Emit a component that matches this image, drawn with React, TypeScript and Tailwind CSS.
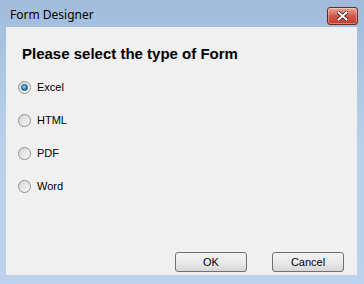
import React, { useState } from "react";

const options = ["Excel", "HTML", "PDF", "Word"];

function Radio({ checked }: { checked: boolean }) {
  return (
    <span className="relative flex h-[13px] w-[13px] shrink-0 items-center justify-center rounded-full border border-[#8e8f8f] bg-gradient-to-br from-[#d4d4d4] to-[#fbfbfb]">
      {checked && (
        <span className="h-[7px] w-[7px] rounded-full border border-[#1c4f7a] bg-[radial-gradient(circle_at_40%_35%,#9fd7f5,#2a83c2_55%,#10497a)]" />
      )}
    </span>
  );
}

export default function App() {
  const [selected, setSelected] = useState("Excel");
  return (
    <div
      className="flex h-[284px] w-[364px] flex-col bg-gradient-to-b from-[#a0bcdc] via-[#b8d0ea] to-[#bad2ec] px-[6px] pb-[9px] pr-[7px]"
      style={{ fontFamily: '"Liberation Sans", Arial, sans-serif' }}
    >
      <div className="flex h-[27px] items-center justify-between">
        <span
          className="pl-[4px] pt-[3px] text-[12px] text-black"
          style={{ fontFamily: '"Noto Sans", "Open Sans", sans-serif' }}
        >
          Form Designer
        </span>
        <button className="mr-[-1px] mt-[4px] flex h-[18px] w-[31px] items-center justify-center rounded-[3px] border border-[#6d2a22] bg-gradient-to-b from-[#e9a99c] via-[#d0574a] to-[#c23d2c] shadow-[inset_0_0_0_1px_rgba(255,255,255,0.35)]">
          <svg width="11" height="10" viewBox="0 0 11 10">
            <path
              d="M1.5 1.5 L9.5 8.5 M9.5 1.5 L1.5 8.5"
              stroke="#3a1410"
              strokeWidth="3.4"
              strokeLinecap="square"
            />
            <path
              d="M1.5 1.5 L9.5 8.5 M9.5 1.5 L1.5 8.5"
              stroke="#ffffff"
              strokeWidth="2"
              strokeLinecap="square"
            />
          </svg>
        </button>
      </div>
      <div className="flex flex-1 flex-col bg-[#f0f0f0] pl-[12px] pr-[13px]">
        <h1 className="mt-[18px] pl-[4px] text-[15px] font-bold leading-[18px] text-black">
          Please select the type of Form
        </h1>
        <div className="mt-[18px] flex flex-col gap-[20px]">
          {options.map((o) => (
            <label
              key={o}
              className="flex h-[13px] cursor-default items-center gap-[6px] text-[11px] text-black"
              onClick={() => setSelected(o)}
            >
              <Radio checked={selected === o} />
              <span>{o}</span>
            </label>
          ))}
        </div>
        <div className="mt-auto mb-[3px] flex justify-end gap-[25px]">
          <button className="h-[20px] w-[72px] rounded-[3px] border border-[#707070] bg-gradient-to-b from-[#f2f2f2] via-[#ebebeb] to-[#d6d6d6] text-[11px] text-black">
            OK
          </button>
          <button className="h-[20px] w-[72px] rounded-[3px] border border-[#707070] bg-gradient-to-b from-[#f2f2f2] via-[#ebebeb] to-[#d6d6d6] text-[11px] text-black">
            Cancel
          </button>
        </div>
      </div>
    </div>
  );
}
